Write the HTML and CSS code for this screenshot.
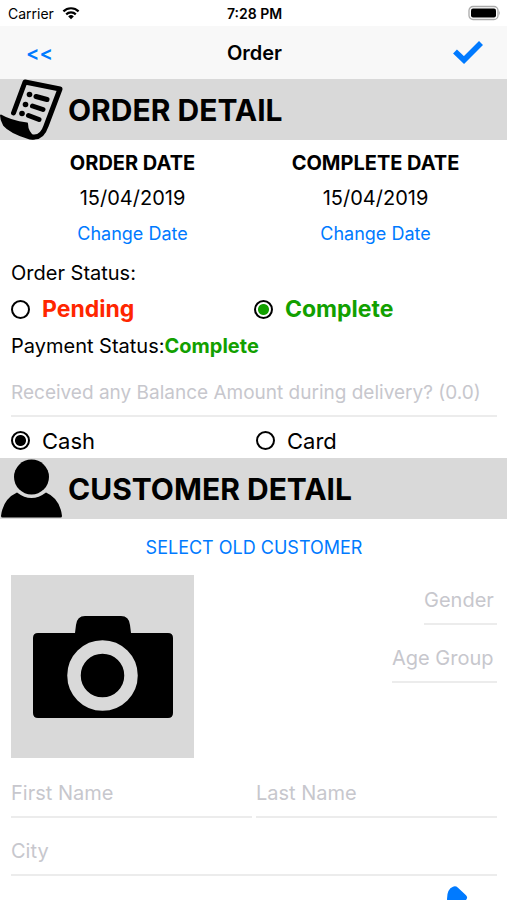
FILE: index.html
```html
<!DOCTYPE html>
<html lang="en">
<head>
<meta charset="UTF-8">
<meta name="viewport" content="width=device-width, initial-scale=1.0">
<title>Order</title>
<link rel="stylesheet" href="styles.css">
</head>
<body>
<div class="status-bar">
    <div class="carrier">
        <span>Carrier</span>
        <svg width="18" height="14" viewBox="0 0 18 14" fill="none" stroke="#000" stroke-width="2.2">
            <path d="M1.4 5.4a10.8 10.8 0 0 1 15.2 0"/>
            <path d="M4.2 8.4a6.8 6.8 0 0 1 9.6 0"/>
            <path d="M9 13.2 6.2 10.4a4 4 0 0 1 5.6 0z" fill="#000" stroke="none"/>
        </svg>
    </div>
    <span class="time">7:28 PM</span>
    <div class="battery">
        <svg width="33" height="16" viewBox="0 0 33 16">
            <rect x="1" y="1.5" width="29" height="13" rx="4" fill="#fff" stroke="#aaa" stroke-width="1.3"/>
            <rect x="3" y="3.5" width="25" height="9" rx="2"/>
            <path d="M31.2 5.6q1.6 2.4 0 4.8z" fill="#aaa"/>
        </svg>
    </div>
</div>

<header class="navbar">
    <button class="nav-button back" type="button">&lt;&lt;</button>
    <h1>Order</h1>
    <button class="nav-button done" type="button" aria-label="Done">
        <svg width="30" height="24" viewBox="0 0 30 24" fill="none" stroke="#007aff" stroke-width="5.6">
            <path d="M2 10.5 11 19 28 2"/>
        </svg>
    </button>
</header>

<h2 class="section-title">
    <svg width="64" height="61" viewBox="0 0 64 61">
        <path d="M13.5 34 25 3 60 10 46 47q-4 12-13 11" fill="none" stroke="#000" stroke-width="5" stroke-linejoin="round" stroke-linecap="round"/>
        <path d="M1 36.5Q10 42 27 44.5q0 9 8 14.5-3 1.500-8-.5Q10 53 4 46 1 41 1 36.5z" stroke="#000" stroke-width="2" stroke-linejoin="round"/>
        <path d="M36 17.500 47 20.500M32.500 27 43 30.500M28.500 36.500 39 40.500" stroke="#000" stroke-width="5" stroke-linecap="round"/>
        <circle cx="29.500" cy="15.500" r="2.800"/>
        <circle cx="25.500" cy="25.500" r="2.800"/>
        <circle cx="22" cy="34.500" r="2.800"/>
    </svg>
    ORDER DETAIL
</h2>

<form class="content">
    <div class="dates">
        <div class="date">
            <h3>ORDER DATE</h3>
            <p>15/04/2019</p>
            <button class="link-button" type="button">Change Date</button>
        </div>
        <div class="date">
            <h3>COMPLETE DATE</h3>
            <p>15/04/2019</p>
            <button class="link-button" type="button">Change Date</button>
        </div>
    </div>

    <p class="label">Order Status:</p>
    <div class="radios status">
        <label class="radio pending"><input type="radio" name="status">Pending</label>
        <label class="radio complete"><input type="radio" name="status" checked>Complete</label>
    </div>
    <p class="label payment">Payment Status:<strong>Complete</strong></p>
    <input class="field balance" type="text" aria-label="Balance amount" placeholder="Received any Balance Amount during delivery? (0.0)">
    <div class="radios method">
        <label class="radio"><input type="radio" name="method" checked>Cash</label>
        <label class="radio"><input type="radio" name="method">Card</label>
    </div>
</form>

<h2 class="section-title">
    <svg width="64" height="61" viewBox="0 0 64 61">
        <circle cx="31.500" cy="19" r="17.500"/>
        <path d="M17 34.500q14.500 11 29 0 14 6 16 23.500 0 1.500-1.500 1.500h-58Q1 59.500 1 58 3 41 17 34.500z"/>
    </svg>
    CUSTOMER DETAIL
</h2>

<form class="content customer">
    <button class="link-button select-customer" type="button">SELECT OLD CUSTOMER</button>
    <div class="profile">
        <button class="photo" type="button" aria-label="Add photo">
            <svg viewBox="0 0 183 183">
                <path d="M27 58h37l1-8q1-9 9-9h36q8 0 9 9l1 8h37q5 0 5 5v75q0 5-5 5H27q-5 0-5-5V63q0-5 5-5z"/>
                <circle cx="91.500" cy="100.500" r="28.500" fill="#000" stroke="#d9d9d9" stroke-width="13.500"/>
            </svg>
        </button>
        <div class="profile-fields">
            <input class="field gender" type="text" aria-label="Gender" placeholder="Gender">
            <input class="field age" type="text" aria-label="Age group" placeholder="Age Group">
        </div>
    </div>
    <div class="names">
        <input class="field" type="text" aria-label="First name" placeholder="First Name">
        <input class="field" type="text" aria-label="Last name" placeholder="Last Name">
    </div>
    <input class="field" type="text" aria-label="City" placeholder="City">
    <div class="call">
        <button class="call-button" type="button" aria-label="Call">
            <svg width="50" height="50" viewBox="0 0 50 50" fill="#007aff">
                <path d="M0 13Q0 3 6 .8q2.500-1.300 5 1l8 7.500q2 2 .5 4L15 19q5 10 15 15l6-5q2-1.500 4 .5l8 8q2 2.500 0 5-3 6-12 6Q2 42 0 13z"/>
            </svg>
        </button>
    </div>
</form>
</body>
</html>
```

FILE: styles.css
```css
* {
    box-sizing: border-box;
}
body {
    margin: 0;
    height: 100vh;
    display: flex;
    flex-direction: column;
    overflow: hidden;
    font-family: Inter, "Liberation Sans", sans-serif;
    font-size: 20px;
    color: #000;
    background-color: #fff;
}
h1, h2, h3, p {
    margin: 0;
}
button {
    padding: 0;
    border: none;
    background: none;
    font-family: inherit;
    color: #007aff;
    cursor: pointer;
}
svg {
    display: block;
}
.status-bar {
    display: grid;
    grid-template-columns: 1fr auto 1fr;
    align-items: center;
    height: 26px;
    flex-shrink: 0;
    padding: 0 6px 0 8px;
    font-size: 14px;
}
.carrier {
    display: flex;
    align-items: center;
    gap: 8px;
}
.time {
    font-weight: 600;
}
.battery {
    justify-self: end;
}
.navbar {
    display: grid;
    grid-template-columns: 1fr auto 1fr;
    align-items: center;
    height: 53px;
    flex-shrink: 0;
    padding: 0 24px 0 26px;
    background-color: #f8f8f8;
}
.navbar h1 {
    font-size: 20px;
    font-weight: 600;
}
.back {
    justify-self: start;
    font-size: 20px;
    font-weight: 600;
}
.done {
    justify-self: end;
}
.section-title {
    display: flex;
    align-items: center;
    gap: 4px;
    height: 61px;
    flex-shrink: 0;
    background-color: #d9d9d9;
    font-size: 30px;
    font-weight: 700;
}
.content {
    padding: 6px 10px 0 11px;
}
.dates {
    display: grid;
    grid-template-columns: 1fr 1fr;
    text-align: center;
    line-height: 35px;
}
.date h3 {
    font-size: 20px;
    font-weight: 700;
}
.link-button {
    font-size: 18px;
    line-height: 35px;
}
.label {
    margin-top: 4px;
    line-height: 36px;
}
.payment {
    margin-top: 1px;
}
.payment strong {
    color: #12a000;
}
.radios {
    display: grid;
    grid-template-columns: 1fr 1fr;
}
.radio {
    display: flex;
    align-items: center;
    gap: 12px;
    height: 36px;
    font-size: 22px;
}
.radio input {
    appearance: none;
    width: 19px;
    height: 19px;
    margin: 0;
    border: 2px solid #000;
    border-radius: 50%;
    color: #000;
}
.radio input:checked {
    background: radial-gradient(circle, currentColor 5px, #fff 6px);
}
.status .radio {
    font-size: 23px;
    font-weight: 700;
}
.pending {
    color: #ff2600;
}
.complete {
    color: #12a000;
}
.complete input {
    color: #12a000;
}
.method {
    column-gap: 4px;
}
.method .radio {
    height: 41px;
    padding-top: 6px;
}
.field {
    display: block;
    width: 100%;
    height: 50px;
    margin-top: 3px;
    padding: 2px 0 0;
    border: none;
    border-bottom: 2px solid #ececec;
    border-radius: 0;
    outline: none;
    background: none;
    font-family: inherit;
    font-size: 20px;
    color: #000;
}
.field::placeholder {
    color: #c7c7cd;
    opacity: 1;
}
.balance {
    font-size: 19px;
}
.customer {
    flex: 1;
    min-height: 0;
    padding-top: 11px;
    overflow: hidden;
}
.select-customer {
    display: block;
    margin: 0 auto 10px;
}
.profile {
    display: flex;
    justify-content: space-between;
}
.photo {
    width: 183px;
    height: 183px;
    background-color: #d9d9d9;
}
.profile-fields {
    display: flex;
    flex-direction: column;
    align-items: flex-end;
    gap: 8px;
}
.profile-fields .field {
    margin-top: 0;
}
.gender {
    width: 73px;
}
.age {
    width: 105px;
}
.names {
    display: grid;
    grid-template-columns: 1fr 1fr;
    column-gap: 4px;
    margin: 7px 0 8px;
}
.call {
    display: flex;
    justify-content: flex-end;
    padding-top: 10px;
}
.names + .field {
    margin-top: 8px;
}
```
